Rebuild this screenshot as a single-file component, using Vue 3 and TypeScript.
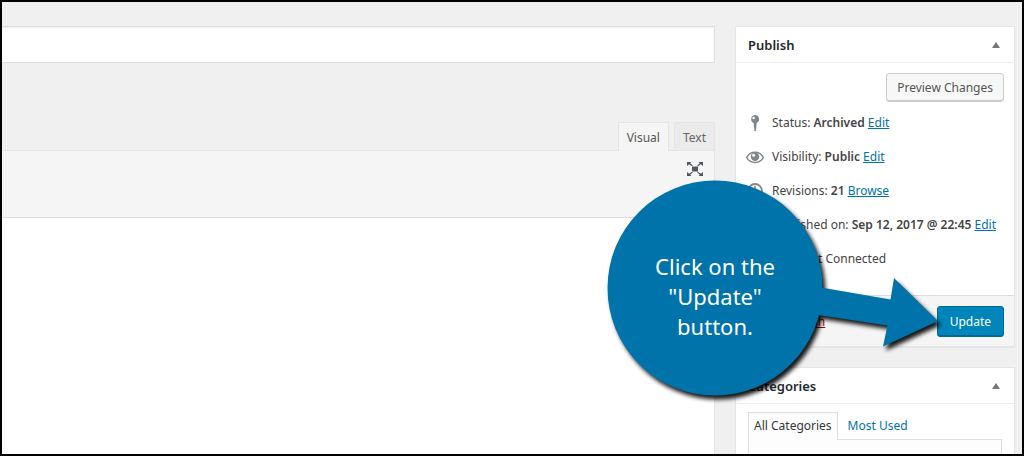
<script setup lang="ts">
import { ref } from 'vue'

interface PublishRow {
  icon: 'pin' | 'eye' | 'clock' | 'calendar' | 'none'
  label: string
  value?: string
  action?: string
}

const title = ref('')
const content = ref('')

const rows: PublishRow[] = [
  { icon: 'pin', label: 'Status:', value: 'Archived', action: 'Edit' },
  { icon: 'eye', label: 'Visibility:', value: 'Public', action: 'Edit' },
  { icon: 'clock', label: 'Revisions:', value: '21', action: 'Browse' },
  { icon: 'calendar', label: 'Published on:', value: 'Sep 12, 2017 @ 22:45', action: 'Edit' },
  { icon: 'none', label: 'Link: Not Connected' },
]
</script>

<template>
  <div class="page">
    <main class="editor">
      <input v-model="title" class="title" type="text" aria-label="Title" />
      <div class="tabs">
        <button type="button" class="tab active">Visual</button>
        <button type="button" class="tab">Text</button>
      </div>
      <div class="toolbar">
        <button type="button" class="expand" aria-label="Distraction-free writing">
          <svg viewBox="0 0 18 16" width="18" height="16" fill="#50575e">
            <path d="M6 5.500h6v5H6z" />
            <path d="M1 1h4.500L4.200 2.300 6.800 4.500 6 5.300 3.200 3.200 1 5zM17 1h-4.500l1.300 1.300-2.600 2.200.8.800 2.800-2.100L17 5zM1 15h4.500l-1.300-1.300 2.600-2.200-.8-.8-2.800 2.100L1 11zM17 15h-4.500l1.300-1.300-2.600-2.200.8-.8 2.800 2.100L17 11z" />
          </svg>
        </button>
      </div>
      <textarea v-model="content" class="content" aria-label="Content"></textarea>
    </main>

    <aside class="side">
      <section class="box">
        <header class="box-head">
          <h2>Publish</h2>
          <button type="button" class="toggle" aria-label="Toggle Publish panel">
            <svg viewBox="0 0 8 6" width="8" height="6"><path d="M4 0l4 6H0z" fill="#72777c" /></svg>
          </button>
        </header>
        <div class="preview">
          <button type="button" class="btn">Preview Changes</button>
        </div>
        <ul class="rows">
          <li v-for="row in rows" :key="row.label">
            <svg class="icon" viewBox="0 0 20 20" width="20" height="20" aria-hidden="true">
              <template v-if="row.icon === 'pin'">
                <path d="M10 2a4.200 4.200 0 0 1 1.700 8l-.7 8h-1.600l-.8-8A4.200 4.200 0 0 1 10 2z" fill="#82878c" />
                <circle cx="8.600" cy="5" r="1.300" fill="#fff" />
              </template>
              <template v-else-if="row.icon === 'eye'">
                <path d="M1.700 10.500C5 3.500 15 3.500 18.300 10.500 15 17 5 17 1.700 10.500z" fill="none" stroke="#82878c" stroke-width="1.500" />
                <circle cx="10" cy="9.800" r="4.200" fill="#82878c" />
                <circle cx="8.600" cy="8.300" r="1.500" fill="#fff" />
              </template>
              <template v-else-if="row.icon === 'clock'">
                <circle cx="10" cy="10" r="7" fill="none" stroke="#82878c" stroke-width="1.800" />
                <path d="M10 5v5l3 2" fill="none" stroke="#82878c" stroke-width="1.600" />
              </template>
              <path v-else-if="row.icon === 'calendar'" d="M3 4h14v13H3zM5 8v7h10V8z" fill="#82878c" fill-rule="evenodd" />
            </svg>
            <span>{{ row.label }} <b v-if="row.value">{{ row.value }}</b>&nbsp;<a v-if="row.action" href="#">{{ row.action }}</a></span>
          </li>
        </ul>
        <footer class="actions">
          <a href="#" class="trash">Move to Trash</a>
          <button type="button" class="btn primary">Update</button>
        </footer>
      </section>

      <section class="box">
        <header class="box-head">
          <h2>Categories</h2>
          <button type="button" class="toggle" aria-label="Toggle Categories panel">
            <svg viewBox="0 0 8 6" width="8" height="6"><path d="M4 0l4 6H0z" fill="#72777c" /></svg>
          </button>
        </header>
        <div class="cats">
          <div class="cat-tabs">
            <a href="#" class="cat-tab current">All Categories</a>
            <a href="#" class="cat-tab">Most Used</a>
          </div>
          <div class="cat-panel"></div>
        </div>
      </section>
    </aside>

    <div class="callout">
      <svg viewBox="0 0 340 230" width="340" height="230" aria-hidden="true">
        <g fill="#0073aa">
          <circle cx="111" cy="113" r="107.500" />
          <path d="M214 112l72.500 12.500L290 103l44 43-55 25.500 4.500-21L208 139z" />
        </g>
      </svg>
      <p>Click on the<br />"Update"<br />button.</p>
    </div>
  </div>
</template>

<style>
body {
  background: #f0f0f0;
}
</style>

<style scoped>
.page {
  position: relative;
  box-sizing: border-box;
  display: flex;
  gap: 20px;
  height: 100vh;
  padding: 24px 7px 0 0;
  overflow: hidden;
  border: 2px solid #000;
  background: #f0f0f0;
  color: #444;
  font-family: "Noto Sans", "Open Sans", sans-serif;
  font-size: 12px;
  line-height: 18px;
}

button,
input,
textarea {
  font: inherit;
  color: inherit;
  margin: 0;
}

a {
  color: #0073aa;
}

.editor {
  flex: 1;
  display: flex;
  flex-direction: column;
  min-width: 0;
}

.title {
  box-sizing: border-box;
  width: 100%;
  height: 37px;
  padding: 3px 8px;
  border: 1px solid #ddd;
  border-left: 0;
  background: #fff;
  box-shadow: inset 0 1px 2px rgba(0, 0, 0, 0.07);
  font-size: 20px;
}

.tabs {
  display: flex;
  justify-content: flex-end;
  gap: 5px;
  margin-top: 59px;
}

.tab {
  position: relative;
  height: 28px;
  padding: 2px 8px 0;
  border: 1px solid #e5e5e5;
  border-bottom: 0;
  background: #ebebeb;
  color: #666;
}

.tab.active {
  height: 29px;
  margin-bottom: -1px;
  background: #f5f5f5;
  color: #555;
  z-index: 1;
}

.toolbar {
  box-sizing: border-box;
  display: flex;
  justify-content: flex-end;
  align-items: flex-start;
  height: 68px;
  padding: 10px;
  border: 1px solid #e5e5e5;
  border-left: 0;
  border-bottom-color: #ddd;
  background: #f5f5f5;
}

.expand {
  display: flex;
  padding: 0;
  border: 0;
  background: none;
}

.content {
  flex: 1;
  box-sizing: border-box;
  width: 100%;
  border: 0;
  border-right: 1px solid #e5e5e5;
  background: #fff;
  resize: none;
}

.side {
  flex: 0 0 280px;
  box-sizing: border-box;
  display: flex;
  flex-direction: column;
  gap: 20px;
}

.box {
  flex: none;
  border: 1px solid #e5e5e5;
  background: #fff;
  box-shadow: 0 1px 1px rgba(0, 0, 0, 0.04);
}

.box-head {
  display: flex;
  justify-content: space-between;
  align-items: center;
  height: 35px;
  padding: 0 14px 0 12px;
  border-bottom: 1px solid #eee;
}

h2 {
  margin: 0;
  color: #23282d;
  font-size: 13px;
  font-weight: 600;
}

.toggle {
  display: flex;
  padding: 0;
  border: 0;
  background: none;
}

.preview {
  display: flex;
  justify-content: flex-end;
  padding: 10px 10px 4px;
}

.btn {
  box-sizing: border-box;
  height: 29px;
  padding: 0 10px;
  border: 1px solid #ccc;
  border-radius: 3px;
  background: #f7f7f7;
  box-shadow: inset 0 -1px 0 #ccc;
  color: #555;
}

.primary {
  height: 31px;
  padding: 0 12px;
  border-color: #006799;
  background: #0085ba;
  box-shadow: inset 0 -1px 0 #006799;
  color: #fff;
}

.rows {
  margin: 0;
  padding: 0 0 19px 9px;
  list-style: none;
}

.rows li {
  display: flex;
  align-items: center;
  gap: 7px;
  height: 34px;
  white-space: nowrap;
}

.icon {
  flex: none;
}

b {
  font-weight: 600;
}

.actions {
  display: flex;
  justify-content: space-between;
  align-items: center;
  padding: 10px 10px 9px;
  border-top: 1px solid #ddd;
  background: #f5f5f5;
}

.trash {
  color: #a00;
}

.cats {
  padding: 8px 12px 0;
}

.cat-tabs {
  display: flex;
}

.cat-tab {
  padding: 4px 5px;
  border: 1px solid transparent;
  border-bottom: 0;
  text-decoration: none;
}

.cat-tab + .cat-tab {
  margin-left: 4px;
}

.cat-tab.current {
  position: relative;
  z-index: 1;
  margin-bottom: -1px;
  border-color: #ddd;
  background: #fdfdfd;
  color: #32373c;
}

.cat-panel {
  height: 200px;
  border: 1px solid #ddd;
  background: #fdfdfd;
}

.callout {
  position: absolute;
  z-index: 2;
  top: 173px;
  right: 78px;
  width: 340px;
  height: 230px;
}

.callout svg {
  display: block;
  overflow: visible;
  filter: drop-shadow(3px 4px 2px rgba(0, 0, 0, 0.9));
}

.callout p {
  position: absolute;
  top: 76px;
  left: 4px;
  width: 214px;
  margin: 0;
  color: #fff;
  font-size: 22px;
  line-height: 30px;
  text-align: center;
}
</style>
